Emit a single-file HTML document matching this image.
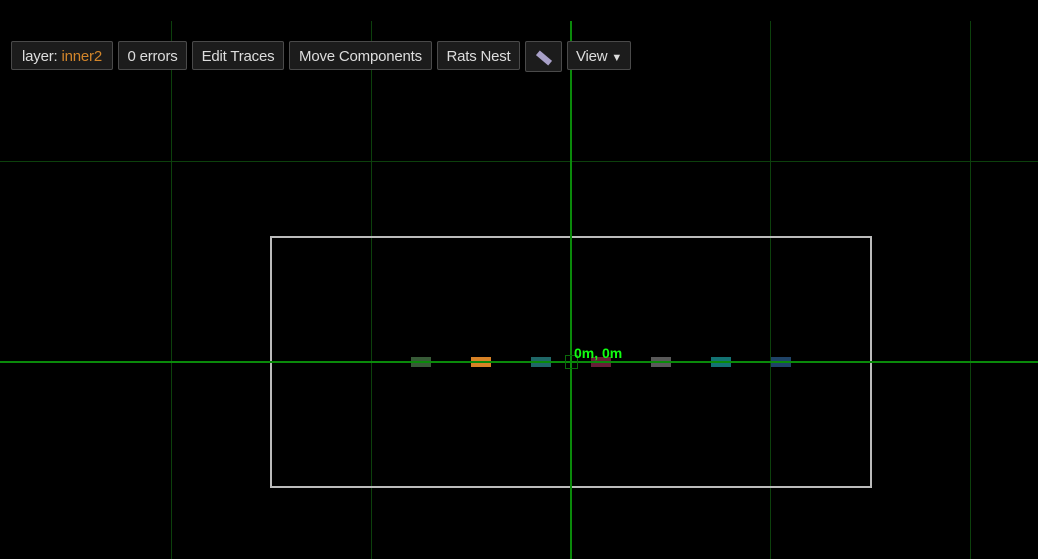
<!DOCTYPE html><html><head><style>
body{margin:0;width:1038px;height:559px;background:#000;position:relative;overflow:hidden;font-family:"Liberation Sans",sans-serif}
.v{position:absolute;top:21px;bottom:0;width:1px;background:#0c400c}
.h{position:absolute;left:0;right:0;height:1px;background:#0c400c}
.b{position:absolute;top:41px;height:29px;box-sizing:border-box;border:1px solid #4a4a4a;border-radius:2px;background:#1c1c1c;color:#ddd;font-size:15px;line-height:30px;padding:0;text-align:center;white-space:nowrap;letter-spacing:-0.2px}
.p{position:absolute;top:357px;width:20px;height:10px;opacity:0.75}
</style></head><body>
<div class="v" style="left:171px"></div><div class="v" style="left:371px"></div><div class="v" style="left:770px"></div><div class="v" style="left:970px"></div>
<div class="h" style="top:161px"></div>
<div style="position:absolute;left:270px;top:236px;width:598px;height:248px;border:2px solid #bbb"></div>
<div class="p" style="left:411px;background:#4a7a4a"></div>
<div class="p" style="left:471px;background:#f0902a;opacity:0.9"></div>
<div class="p" style="left:531px;background:#2a8a8a"></div>
<div class="p" style="left:591px;background:#8a2a4a"></div>
<div class="p" style="left:651px;background:#777"></div>
<div class="p" style="left:711px;background:#1a9a9a"></div>
<div class="p" style="left:771px;background:#2a5a8a"></div>
<div style="position:absolute;left:0;right:0;top:361px;height:2px;background:#0a8a0a"></div>
<div style="position:absolute;left:570px;top:21px;bottom:0;width:2px;background:#0a8a0a"></div>
<div style="position:absolute;left:565px;top:355px;width:11px;height:12px;border:1px solid #0a6a0a"></div>
<div style="position:absolute;left:574px;top:345px;color:#1f1;font-size:14px;font-weight:bold">0m, 0m</div>
<div class="b" style="left:11px;width:102px">layer: <span style="color:#d2852a">inner2</span></div>
<div class="b" style="left:118px;width:69px">0 errors</div>
<div class="b" style="left:192px;width:92px">Edit Traces</div>
<div class="b" style="left:289px;width:143px">Move Components</div>
<div class="b" style="left:437px;width:83px">Rats Nest</div>
<div class="b" style="left:525px;width:37px;height:31px"><div style="position:absolute;left:10px;top:13px;width:16px;height:6px;background:#a8a0c8;transform:rotate(40deg)"></div></div>
<div class="b" style="left:567px;width:64px">View <span style="font-size:11px">▼</span></div>
</body></html>
